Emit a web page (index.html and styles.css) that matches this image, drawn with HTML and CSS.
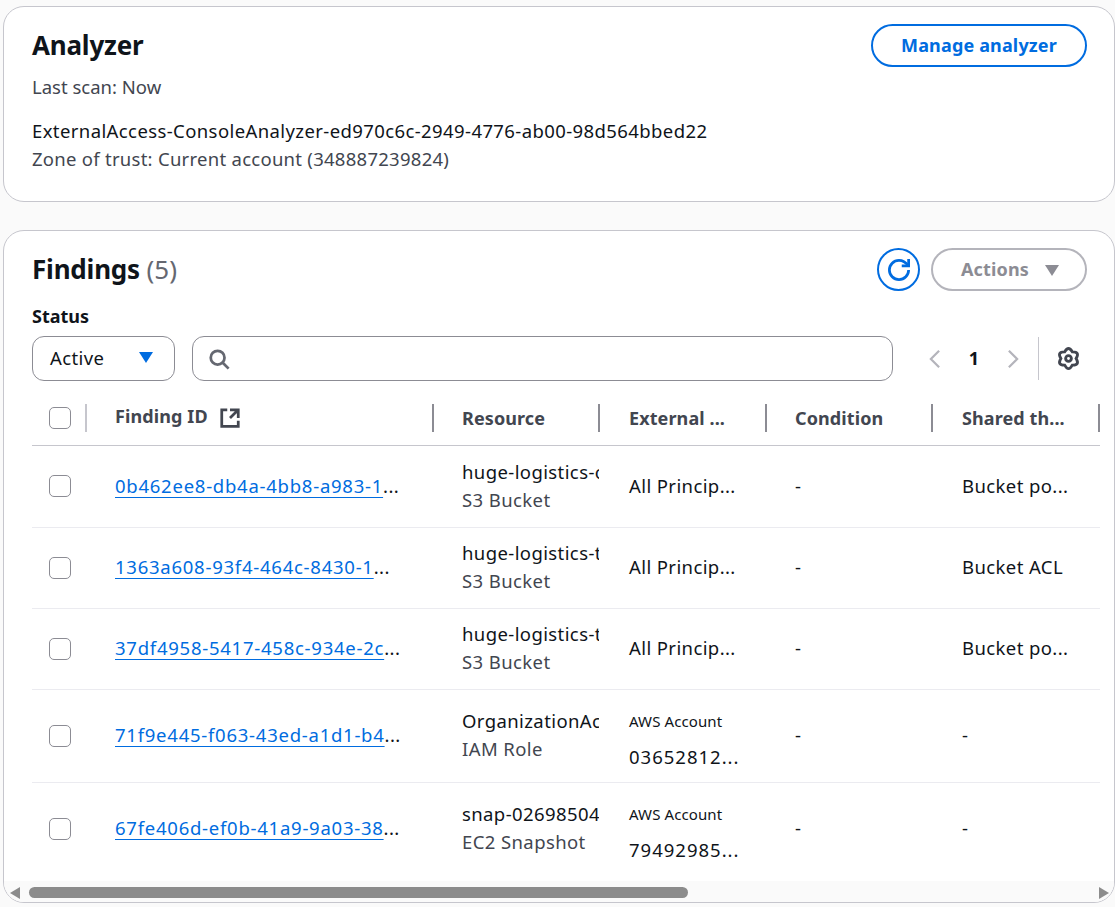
FILE: index.html
```html
<!DOCTYPE html>
<html lang="en">
<head>
  <meta charset="UTF-8">
  <meta name="viewport" content="width=device-width, initial-scale=1.0">
  <title>Analyzer</title>
  <link rel="stylesheet" href="styles.css">
</head>
<body>
  <section class="card analyzer">
    <div class="card-head">
      <div>
        <h2>Analyzer</h2>
        <p class="muted scan">Last scan: Now</p>
      </div>
      <button class="btn primary" type="button">Manage analyzer</button>
    </div>
    <p class="analyzer-name">ExternalAccess-ConsoleAnalyzer-ed970c6c-2949-4776-ab00-98d564bbed22</p>
    <p class="muted trust">Zone of trust: Current account (348887239824)</p>
  </section>

  <section class="card findings">
    <div class="findings-inner">
      <div class="card-head findings-head">
        <h2>Findings <span class="count">(5)</span></h2>
        <div class="head-actions">
          <button class="btn-icon" type="button" aria-label="Refresh">
            <svg viewBox="0 0 16 16" width="22" height="22"><path d="M10 5h5V0"/><path d="M15 8a6.99 6.99 0 0 1-7 7 6.99 6.99 0 0 1-7-7 6.99 6.99 0 0 1 7-7c2.8 0 5 1.5 6.6 3.7"/></svg>
          </button>
          <button class="btn disabled" type="button">Actions <span class="caret gray"></span></button>
        </div>
      </div>

      <div class="status-label">Status</div>
      <div class="filters">
        <div class="select">Active <span class="caret blue"></span></div>
        <div class="search">
          <svg viewBox="0 0 16 16" width="22" height="22"><circle cx="7" cy="7" r="5"/><path d="m15 15-4.46-4.46"/></svg>
        </div>
        <div class="pager">
          <svg class="chev" viewBox="0 0 16 16" width="22" height="22"><path d="M11 2 5 8l6 6"/></svg>
          <span class="page-num">1</span>
          <svg class="chev" viewBox="0 0 16 16" width="22" height="22"><path d="m5 2 6 6-6 6"/></svg>
        </div>
        <div class="prefs">
          <svg viewBox="0 0 16 16" width="23" height="23"><circle cx="8" cy="8" r="2"/><path d="M5.350 3.410Q8-1.410 10.650 3.410 16.150 3.300 13.300 8 16.150 12.700 10.650 12.590 8 17.410 5.350 12.590-.15 12.700 2.700 8-.15 3.300 5.350 3.410Z"/></svg>
        </div>
      </div>

      <table class="table">
        <colgroup>
          <col class="c-check"><col class="c-id"><col class="c-a"><col class="c-b"><col class="c-a"><col class="c-b">
        </colgroup>
        <thead>
          <tr>
            <th class="light"><span class="box"></span></th>
            <th><span class="id-head">Finding ID</span>
              <svg class="ext" viewBox="0 0 16 16" width="22" height="22"><path d="M14 8.010v-6H8M14.020 2 8 8.010M6 2.010H2v12h12v-3.990"/></svg>
            </th>
            <th>Resource</th>
            <th class="wide">External ...</th>
            <th>Condition</th>
            <th class="wide">Shared th...</th>
          </tr>
        </thead>
        <tbody>
          <tr class="first">
            <td><span class="box"></span></td>
            <td><a href="#">0b462ee8-db4a-4bb8-a983-1</a>...</td>
            <td><div class="clip">huge-logistics-customer-data</div><div class="clip muted">S3 Bucket</div></td>
            <td class="wide">All Princip...</td>
            <td>-</td>
            <td class="wide">Bucket po...</td>
          </tr>
          <tr>
            <td><span class="box"></span></td>
            <td><a href="#">1363a608-93f4-464c-8430-1</a>...</td>
            <td><div class="clip">huge-logistics-transactions</div><div class="clip muted">S3 Bucket</div></td>
            <td class="wide">All Princip...</td>
            <td>-</td>
            <td class="wide">Bucket ACL</td>
          </tr>
          <tr>
            <td><span class="box"></span></td>
            <td><a href="#">37df4958-5417-458c-934e-2c</a>...</td>
            <td><div class="clip">huge-logistics-tracking</div><div class="clip muted">S3 Bucket</div></td>
            <td class="wide">All Princip...</td>
            <td>-</td>
            <td class="wide">Bucket po...</td>
          </tr>
          <tr class="tall">
            <td><span class="box"></span></td>
            <td><a href="#">71f9e445-f063-43ed-a1d1-b4</a>...</td>
            <td><div class="clip">OrganizationAccountAccessRole</div><div class="clip muted">IAM Role</div></td>
            <td class="wide acct"><div class="acct-type">AWS Account</div><div class="acct-id">03652812...</div></td>
            <td>-</td>
            <td class="wide">-</td>
          </tr>
          <tr class="tall last">
            <td><span class="box"></span></td>
            <td><a href="#">67fe406d-ef0b-41a9-9a03-38</a>...</td>
            <td><div class="clip">snap-0269850412345678</div><div class="clip muted">EC2 Snapshot</div></td>
            <td class="wide acct"><div class="acct-type">AWS Account</div><div class="acct-id">79492985...</div></td>
            <td>-</td>
            <td class="wide">-</td>
          </tr>
        </tbody>
      </table>
    </div>

    <div class="scrollbar">
      <span class="arrow left"></span>
      <div class="track"><div class="thumb"></div></div>
      <span class="arrow right"></span>
    </div>
  </section>
</body>
</html>
```

FILE: styles.css
```css
* { box-sizing: border-box; }
html, body { height: 100%; }
body { font-family: "Noto Sans", "Open Sans", Arial, sans-serif; font-size: 18.5px; line-height: 28px; letter-spacing: .4px; color: #0f141a; background: #fafafa; margin: 0; padding: 6px 0 0 3px; overflow: hidden; }
h2 { font-size: 26px; line-height: 36px; font-weight: 700; letter-spacing: -.2px; margin: 0; }
p { margin: 0; }
svg { fill: none; stroke: currentColor; stroke-width: 2; display: block; }

.card { background: #fff; border: 1px solid #c6c6cd; border-radius: 21px; overflow: hidden; }
.card-head { display: flex; justify-content: space-between; align-items: flex-start; }
.muted { color: #424650; }

.analyzer { height: 196px; padding: 20px 27px 0 28px; margin-bottom: 28px; }
.analyzer .btn { margin-top: -3px; }
.scan { margin-top: 10px; margin-bottom: 16px; letter-spacing: 0; }
.trust { letter-spacing: .27px; }

.btn { font: inherit; font-size: 18px; font-weight: 700; letter-spacing: .15px; height: 43px; border-radius: 22px; background: #fff; display: flex; align-items: center; justify-content: center; padding: 0 0 2px; }
.primary { width: 216px; border: 2px solid #006ce0; color: #006ce0; }
.disabled { width: 156px; gap: 16px; padding-left: 2px; border: 2px solid #b4b4bb; color: #8c8c94; }
.disabled .caret { margin-top: 3px; }
.btn-icon { width: 43px; height: 43px; border: 2px solid #006ce0; border-radius: 50%; background: #fff; color: #006ce0; padding: 0; display: flex; align-items: center; justify-content: center; }
.head-actions { display: flex; gap: 11px; }

.caret { width: 0; height: 0; border-left: 7.5px solid transparent; border-right: 7.5px solid transparent; display: inline-block; }
.caret.gray { border-top: 11px solid #8c8c94; }
.caret.blue { border-top: 11px solid #006ce0; }

.findings { height: 673px; position: relative; }
.findings-inner { padding: 17px 0 0 28px; }
.findings-head { padding-right: 27px; height: 56px; }
.findings-head h2 { margin-top: 3px; }
.count { font-weight: 400; color: #656871; letter-spacing: 0; }

.status-label { font-size: 18px; font-weight: 700; letter-spacing: 0; line-height: 24px; }
.filters { display: flex; align-items: center; margin-top: 8px; height: 45px; }
.select { width: 143px; height: 45px; border: 1px solid #8c8c94; border-radius: 12px; display: flex; align-items: center; justify-content: space-between; padding: 0 21px 2px 17px; }
.search { width: 701px; height: 45px; margin-left: 17px; border: 1px solid #8c8c94; border-radius: 12px; display: flex; align-items: center; padding-left: 15px; color: #656871; }
.pager { display: flex; align-items: center; color: #b4b4bb; margin-left: 31px; }
.page-num { color: #0f141a; font-size: 18px; font-weight: 700; letter-spacing: 0; width: 56px; text-align: center; padding-bottom: 2px; }
.chev { stroke-width: 1.6; }
.prefs { margin-left: 14px; padding-left: 18px; border-left: 1px solid #c6c6cd; height: 43px; display: flex; align-items: center; color: #424650; }

.table { border-collapse: collapse; table-layout: fixed; width: 1068px; margin-top: 10px; }
.c-check { width: 55px; }
.c-id { width: 347px; }
.c-a { width: 166px; }
.c-b { width: 167px; }
th { text-align: left; font-size: 18px; font-weight: 700; letter-spacing: .1px; color: #424650; height: 54px; padding: 0 0 0 28px; border-bottom: 1px solid #c6c6cd; position: relative; white-space: nowrap; }
th::after { content: ""; position: absolute; right: 0; top: 13px; height: 28px; width: 2px; background: #8c8c94; }
th.light::after { background: #c6c6cd; }
th:first-child, td:first-child { padding-left: 17px; }
th.wide, td.wide { padding-left: 29px; }
.id-head { position: relative; top: -2px; }
th .ext { display: inline-block; vertical-align: -4px; margin-left: 7px; color: #424650; }
td { padding: 0 1px 2px 28px; border-bottom: 1px solid #ebebf0; height: 81px; vertical-align: middle; white-space: nowrap; overflow: hidden; }
tr.first td { height: 82px; padding-bottom: 1px; }
tr.tall td { height: 93px; }
tr.last td { border-bottom: 0; }
td.acct { padding-top: 8px; }
td .box { margin-top: 2px; }
tr.first td .box { margin-top: 1px; }
a { color: #006ce0; letter-spacing: .75px; text-decoration: underline; text-underline-offset: 4px; text-decoration-thickness: 1px; }
.box { display: block; width: 22px; height: 22px; border: 1px solid #8c8c94; border-radius: 5px; background: #fff; }
.clip { overflow: hidden; }
.acct-type { font-size: 15px; letter-spacing: .1px; margin-bottom: 8px; }
.acct-id { letter-spacing: 1px; }

.scrollbar { position: absolute; left: 0; right: 0; bottom: 0; height: 21px; background: #fafafa; display: flex; align-items: center; padding: 2px 5px 0 6px; }
.track { flex: 1; height: 11px; margin: 0 6px 0 9px; }
.thumb { width: 659px; height: 11px; border-radius: 6px; background: #8c8c8c; }
.arrow { width: 0; height: 0; border-top: 6px solid transparent; border-bottom: 6px solid transparent; }
.arrow.left { border-right: 10px solid #8c8c8c; }
.arrow.right { border-left: 10px solid #8c8c8c; }
```
